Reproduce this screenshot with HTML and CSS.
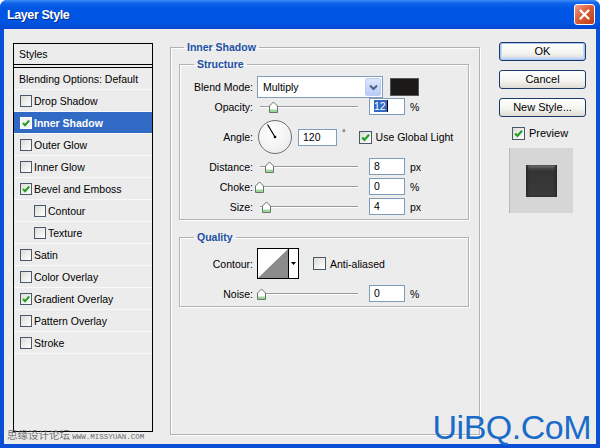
FILE: index.html
```html
<!DOCTYPE html>
<html>
	<head>
		<meta charset="UTF-8">
		<title>Layer Style</title>
		<link rel="stylesheet" href="styles.css">
	</head>

	<body>
		<div class="window">
			<div class="titlebar">
				<span class="title">Layer Style</span>
				<span class="close">
					<svg width="13" height="13" viewBox="0 0 13 13"><path d="M2.5 2.5l8 8M10.5 2.5l-8 8" stroke="#fff" stroke-width="2.2" stroke-linecap="round"/></svg>
				</span>
			</div>

			<div class="client">
				<!--左边样式列表-->
				<div class="styles-list">
					<div class="list-head">Styles</div>
					<div class="list-item first">Blending Options: Default</div>
					<div class="list-item"><span class="cb"></span>Drop Shadow</div>
					<div class="list-item focus"><span class="cb on"><svg width="10" height="10" viewBox="0 0 10 10"><path d="M2 5l2 2.2L8.2 2.5" fill="none" stroke="#21a121" stroke-width="2"/></svg></span>Inner Shadow</div>
					<div class="list-item"><span class="cb"></span>Outer Glow</div>
					<div class="list-item"><span class="cb"></span>Inner Glow</div>
					<div class="list-item"><span class="cb on"><svg width="10" height="10" viewBox="0 0 10 10"><path d="M2 5l2 2.2L8.2 2.5" fill="none" stroke="#21a121" stroke-width="2"/></svg></span>Bevel and Emboss</div>
					<div class="list-item sub"><span class="cb"></span>Contour</div>
					<div class="list-item sub"><span class="cb"></span>Texture</div>
					<div class="list-item"><span class="cb"></span>Satin</div>
					<div class="list-item"><span class="cb"></span>Color Overlay</div>
					<div class="list-item"><span class="cb on"><svg width="10" height="10" viewBox="0 0 10 10"><path d="M2 5l2 2.2L8.2 2.5" fill="none" stroke="#21a121" stroke-width="2"/></svg></span>Gradient Overlay</div>
					<div class="list-item"><span class="cb"></span>Pattern Overlay</div>
					<div class="list-item"><span class="cb"></span>Stroke</div>
				</div>

				<!--中间参数-->
				<fieldset class="group main">
					<legend>Inner Shadow</legend>

					<fieldset class="group structure">
						<legend>Structure</legend>
						<div class="row blend">
							<label>Blend Mode:</label>
							<div class="select">Multiply<span class="arrow"><svg width="9" height="7" viewBox="0 0 9 7"><path d="M1 1.5l3.5 3.5L8 1.5" fill="none" stroke="#4d6185" stroke-width="2"/></svg></span></div>
							<span class="swatch"></span>
						</div>
						<div class="row">
							<label>Opacity:</label>
							<div class="slider"><div class="track"></div><svg class="thumb" style="left:11px" width="11" height="12" viewBox="0 0 11 12"><path d="M1.5 11.5V5L5.5 1l4 4v6.5z" fill="#fff" stroke="#687468"/><path d="M2 8.5h7V11H2z" fill="#9bd79b"/></svg></div>
							<div class="num"><span class="sel">12</span></div>
							<span class="unit">%</span>
						</div>
						<div class="row angle">
							<label>Angle:</label>
							<div class="dial"><svg width="32" height="32" viewBox="0 0 32 32"><path d="M16 16L8.5 3.5" stroke="#000" stroke-width="1.2"/><circle cx="16" cy="16" r="1.3" fill="#000"/></svg></div>
							<div class="num wide">120</div>
							<span class="deg">°</span>
							<span class="cb big on"><svg width="11" height="11" viewBox="0 0 10 10"><path d="M2 5l2 2.2L8.2 2.5" fill="none" stroke="#21a121" stroke-width="2"/></svg></span>
							<span class="cb-label">Use Global Light</span>
						</div>
						<div class="row distance">
							<label>Distance:</label>
							<div class="slider"><div class="track"></div><svg class="thumb" style="left:7px" width="11" height="12" viewBox="0 0 11 12"><path d="M1.5 11.5V5L5.5 1l4 4v6.5z" fill="#fff" stroke="#687468"/><path d="M2 8.5h7V11H2z" fill="#9bd79b"/></svg></div>
							<div class="num">8</div>
							<span class="unit">px</span>
						</div>
						<div class="row choke">
							<label>Choke:</label>
							<div class="slider"><div class="track"></div><svg class="thumb" style="left:-3px" width="11" height="12" viewBox="0 0 11 12"><path d="M1.5 11.5V5L5.5 1l4 4v6.5z" fill="#fff" stroke="#687468"/><path d="M2 8.5h7V11H2z" fill="#9bd79b"/></svg></div>
							<div class="num">0</div>
							<span class="unit">%</span>
						</div>
						<div class="row choke">
							<label>Size:</label>
							<div class="slider"><div class="track"></div><svg class="thumb" style="left:4px" width="11" height="12" viewBox="0 0 11 12"><path d="M1.5 11.5V5L5.5 1l4 4v6.5z" fill="#fff" stroke="#687468"/><path d="M2 8.5h7V11H2z" fill="#9bd79b"/></svg></div>
							<div class="num">4</div>
							<span class="unit">px</span>
						</div>
					</fieldset>

					<fieldset class="group quality">
						<legend>Quality</legend>
						<div class="row contour-row">
							<label>Contour:</label>
							<div class="contour">
								<svg width="30" height="29" viewBox="0 0 30 29"><path d="M0 29L30 0V29z" fill="#8c8c8c"/></svg>
								<span class="drop"><svg width="5" height="3" viewBox="0 0 5 3"><path d="M0 0h5L2.5 3z" fill="#000"/></svg></span>
							</div>
							<span class="cb big aa"></span>
							<span class="cb-label">Anti-aliased</span>
						</div>
						<div class="row noise">
							<label>Noise:</label>
							<div class="slider"><div class="track"></div><svg class="thumb" style="left:-1px" width="11" height="12" viewBox="0 0 11 12"><path d="M1.5 11.5V5L5.5 1l4 4v6.5z" fill="#fff" stroke="#687468"/><path d="M2 8.5h7V11H2z" fill="#9bd79b"/></svg></div>
							<div class="num">0</div>
							<span class="unit">%</span>
						</div>
					</fieldset>
				</fieldset>

				<!--右边按钮-->
				<div class="side">
					<div class="btn default">OK</div>
					<div class="btn">Cancel</div>
					<div class="btn">New Style...</div>
					<div class="preview-row">
						<span class="cb big on"><svg width="11" height="11" viewBox="0 0 10 10"><path d="M2 5l2 2.2L8.2 2.5" fill="none" stroke="#21a121" stroke-width="2"/></svg></span>
						<span class="cb-label">Preview</span>
					</div>
					<div class="preview"><div class="swatch-big"></div></div>
				</div>
			</div>

			<div class="mark-cn">思缘设计论坛 <span>WWW.MISSYUAN.COM</span></div>
			<div class="mark-uibq">UiBQ.CoM</div>
		</div>
	</body>

</html>
```

FILE: styles.css
```css
body {
	margin: 0;
	padding: 0;
	background: #fff;
}

.window {
	position: relative;
	width: 600px;
	height: 448px;
	box-sizing: border-box;
	display: flex;
	flex-direction: column;
	background: #0a4fd6;
	border-radius: 7px 7px 0 0;
	overflow: hidden;
	font-family: "Liberation Sans", Arial, sans-serif;
	font-size: 10.5px;
	color: #000;
}

.titlebar {
	flex: none;
	height: 29px;
	display: flex;
	align-items: center;
	justify-content: space-between;
	padding: 0 5px 0 7px;
	background: linear-gradient(#3d8ff6 0, #1264ea 3px, #0056e4 8px, #0055e3 22px, #0047d2 29px);
}

.title {
	color: #fff;
	font-weight: bold;
	font-size: 12.5px;
	letter-spacing: -0.4px;
	text-shadow: 1px 1px 0 #0b2d86;
}

.close {
	width: 19px;
	height: 19px;
	border: 1px solid #fff;
	border-radius: 3px;
	display: flex;
	align-items: center;
	justify-content: center;
	background: linear-gradient(135deg, #eca089, #d9603a 45%, #bd3b13);
}

.client {
	flex: 1;
	margin: 0 4px 4px;
	padding: 12px 0 0 9px;
	display: flex;
	align-items: flex-start;
	background: #ececec;
}

/*left list*/
.styles-list {
	width: 140px;
	height: 389px;
	margin-top: 2px;
	box-sizing: border-box;
	border: 1px solid #000;
}

.list-head {
	height: 20px;
	line-height: 20px;
	padding-left: 5px;
	border-bottom: 1px solid #000;
}

.list-item {
	height: 21px;
	display: flex;
	align-items: center;
	padding-left: 6px;
	border-bottom: 1px solid #f9f9f9;
}

.list-item.first {
	margin-top: 2px;
	border-top: 1px solid #000;
	padding-left: 5px;
}

.list-item.sub {
	padding-left: 20px;
}

.list-item.focus {
	background: #316ac5;
	color: #fff;
	font-weight: bold;
}

.cb {
	flex: none;
	width: 12px;
	height: 12px;
	box-sizing: border-box;
	margin-right: 2px;
	border: 1px solid #4a5868;
	background: linear-gradient(135deg, #dcdcd6, #fff);
	display: flex;
	align-items: center;
	justify-content: center;
}

.cb.big {
	width: 13px;
	height: 13px;
}

.focus .cb {
	border-color: #fff;
	background: #f4f4f4;
}

.cb-label {
	margin-left: 2px;
}

/*groups*/
.group {
	margin: 0;
	min-width: 0;
	box-sizing: border-box;
	border: 1px solid #b2b2b2;
	box-shadow: inset 1px 1px 0 #fff, 1px 1px 0 #fff;
}

.group legend {
	padding: 0 3px;
	margin-left: 5px;
	line-height: 13px;
	font-weight: bold;
	color: #2150a4;
}

.main {
	width: 310px;
	height: 394px;
	margin-left: 17px;
	padding: 0 10px 0 8px;
}

.structure {
	margin-top: 4px;
	padding: 0 0 4px;
}

.structure legend,
.quality legend {
	margin-left: 14px;
}

.quality {
	margin-top: 11px;
	padding: 0 0 4px;
}

.row {
	display: flex;
	align-items: center;
	height: 17px;
}

.row label {
	width: 73px;
	margin-right: 4px;
	text-align: right;
}

.row.blend {
	height: 22px;
	margin-top: 5px;
}

.row.angle {
	height: 34px;
	margin-top: 5px;
}

.row.distance {
	margin-top: 4px;
}

.row.choke {
	margin-top: 3px;
}

.row.contour-row {
	height: 31px;
	margin-top: 4px;
}

.row.noise {
	margin-top: 6px;
}

.select {
	width: 126px;
	height: 22px;
	box-sizing: border-box;
	display: flex;
	align-items: center;
	padding: 0 1px 0 5px;
	border: 1px solid #7f9db9;
	background: #fff;
}

.select .arrow {
	margin-left: auto;
	width: 16px;
	height: 18px;
	box-sizing: border-box;
	display: flex;
	align-items: center;
	justify-content: center;
	border: 1px solid #bccdf2;
	border-radius: 2px;
	background: linear-gradient(#dce6fd, #b9cbf7);
}

.swatch {
	width: 29px;
	height: 18px;
	margin-left: 7px;
	box-sizing: border-box;
	border: 1px solid #555;
	background: #1c1919;
}

.slider {
	position: relative;
	width: 101px;
	height: 17px;
	margin-right: 11px;
}

.slider .track {
	margin: 8px 0 0 3px;
	height: 1px;
	background: #9a9a9a;
	border-bottom: 1px solid #fff;
}

.slider .thumb {
	position: absolute;
	top: 3px;
}

.num {
	width: 36px;
	height: 17px;
	box-sizing: border-box;
	padding-left: 4px;
	line-height: 15px;
	border: 1px solid #7f9db9;
	background: #fff;
}

.num .sel {
	background: #316ac5;
	color: #fff;
	padding-right: 1px;
	border-right: 1px solid #000;
}

.num.wide {
	width: 39px;
	margin-left: 6px;
}

.unit {
	margin-left: 5px;
}

.dial {
	width: 34px;
	height: 34px;
	margin-left: 1px;
	box-sizing: border-box;
	border: 1px solid #6f6f6f;
	border-radius: 50%;
	background: radial-gradient(circle at 40% 35%, #fff, #f2f2f2 60%, #dedede);
}

.dial svg {
	display: block;
}

.deg {
	margin: -8px 0 0 5px;
	font-size: 9px;
}

.angle .cb {
	margin-left: 13px;
}

.contour {
	width: 42px;
	height: 31px;
	box-sizing: border-box;
	display: flex;
	border: 1px solid #000;
	background: #fff;
}

.contour svg {
	display: block;
}

.contour .drop {
	flex: 1;
	display: flex;
	align-items: center;
	justify-content: center;
	border-left: 1px solid #000;
}

.cb.aa {
	margin-left: 14px;
}

/*right side*/
.side {
	width: 87px;
	margin: 1px 0 0 19px;
	display: flex;
	flex-direction: column;
}

.btn {
	height: 19px;
	line-height: 17px;
	margin-bottom: 9px;
	box-sizing: border-box;
	text-align: center;
	font-size: 11px;
	border: 1px solid #1b3a6a;
	border-radius: 3px;
	background: linear-gradient(#fff, #f3f3ef 60%, #dedbd2);
}

.btn.default {
	box-shadow: inset 0 0 0 1px #a9c2ee, inset 0 -1px 0 2px #c9daf7;
}

.preview-row {
	height: 14px;
	display: flex;
	align-items: center;
	padding-left: 13px;
	font-size: 11px;
}

.preview {
	width: 64px;
	height: 65px;
	margin: 8px 0 0 10px;
	box-sizing: border-box;
	display: flex;
	align-items: center;
	justify-content: center;
	border-left: 1px solid #b8b8b8;
	background: #d6d6d6;
}

.swatch-big {
	width: 31px;
	height: 32px;
	background: linear-gradient(#8a8a8a, #4a4a4a 3px, #343434 6px, #3a3a3a);
	box-shadow: inset 2px 0 2px #2a2a2a, inset -2px 0 2px #2a2a2a;
}

/*watermarks*/
.mark-cn {
	position: absolute;
	left: 7px;
	bottom: 4px;
	font-family: "Noto Sans CJK SC", sans-serif;
	font-size: 10.5px;
	line-height: 13px;
	color: #707070;
}

.mark-cn span {
	font-family: "Liberation Mono", monospace;
	font-size: 7.5px;
	color: #6a6a6a;
}

.mark-uibq {
	position: absolute;
	right: 9px;
	bottom: 1px;
	font-family: "Liberation Sans", Arial, sans-serif;
	font-size: 34px;
	letter-spacing: -0.5px;
	color: #1b6cc8;
}
```
